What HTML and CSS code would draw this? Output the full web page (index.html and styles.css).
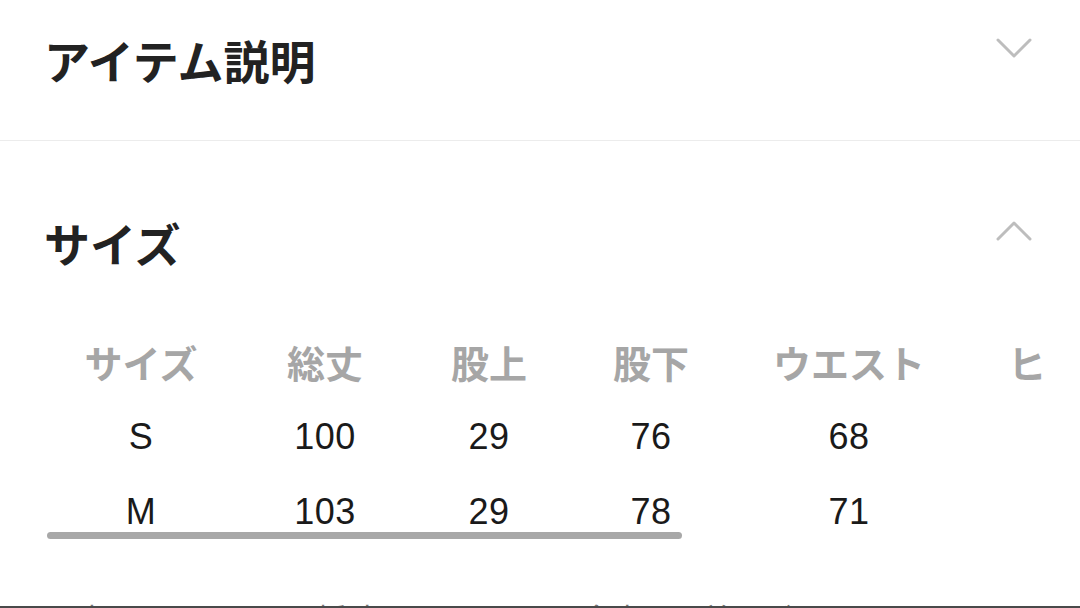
FILE: index.html
```html
<!DOCTYPE html>
<html lang="ja">
<head>
<meta charset="utf-8">
<link rel="stylesheet" href="styles.css">
</head>
<body>
<div class="page">
  <section class="acc acc-first">
    <div class="acc-head">
      <h2 class="acc-title">アイテム説明</h2>
      <svg class="chev" width="38" height="22" viewBox="0 0 38 22"><polyline points="3,3 19,19 35,3" fill="none" stroke="#bdbdbd" stroke-width="3" stroke-linecap="round" stroke-linejoin="round"/></svg>
    </div>
  </section>
  <section class="acc acc-second">
    <div class="acc-head">
      <h2 class="acc-title">サイズ</h2>
      <svg class="chev" width="38" height="22" viewBox="0 0 38 22"><polyline points="3,19 19,3 35,19" fill="none" stroke="#bdbdbd" stroke-width="3" stroke-linecap="round" stroke-linejoin="round"/></svg>
    </div>
    <div class="table-wrap">
      <table class="size-table">
        <colgroup>
          <col class="c1"><col class="c2"><col class="c3"><col class="c4"><col class="c5"><col class="c6">
        </colgroup>
        <thead>
          <tr><th>サイズ</th><th>総丈</th><th>股上</th><th>股下</th><th>ウエスト</th><th>ヒップ</th></tr>
        </thead>
        <tbody>
          <tr><td>S</td><td>100</td><td>29</td><td>76</td><td>68</td><td></td></tr>
          <tr><td>M</td><td>103</td><td>29</td><td>78</td><td>71</td><td></td></tr>
        </tbody>
      </table>
      <div class="scroll-thumb"></div>
    </div>
    <p class="note">※商品は平置きにて採寸しております。多少の誤差はご了承ください。</p>
  </section>
</div>
<div class="bottom-edge"></div>
</body>
</html>
```

FILE: styles.css
```css
html, body {
  margin: 0;
  padding: 0;
  background: #ffffff;
}
body {
  width: 1080px;
  height: 608px;
  overflow: hidden;
  font-family: "Liberation Sans", "Noto Sans CJK JP", sans-serif;
  color: #1e1e1e;
}
.page {
  width: 1080px;
}
.acc-first {
  padding: 29px 0 51px;
  border-bottom: 1px solid #ececec;
}
.acc-second {
  padding: 71px 0 0;
}
.acc-head {
  height: 60px;
  display: flex;
  align-items: center;
  justify-content: space-between;
  padding: 0 47px 0 44px;
}
.acc-title {
  margin: 0;
  font-family: "Noto Sans CJK JP", sans-serif;
  font-weight: 700;
  font-size: 46px;
  line-height: 60px;
  color: #222222;
}
.chev {
  margin-bottom: 22px;
}
.table-wrap {
  position: relative;
  margin: 52px 0 0 47px;
  width: 999px;
  overflow: hidden;
}
.size-table {
  border-collapse: collapse;
  table-layout: fixed;
  width: 1124px;
  white-space: nowrap;
}
.c1 { width: 188px; }
.c2 { width: 180px; }
.c3 { width: 148px; }
.c4 { width: 176px; }
.c5 { width: 220px; }
.c6 { width: 212px; }
.size-table th,
.size-table td {
  padding: 0;
  height: 75px;
  text-align: center;
}
.size-table th {
  font-family: "Noto Sans CJK JP", sans-serif;
  font-weight: 700;
  font-size: 38px;
  color: #a6a6a6;
}
.size-table td {
  font-family: "Liberation Sans", "Noto Sans CJK JP", sans-serif;
  font-size: 36px;
  letter-spacing: 0.5px;
  color: #1a1a1a;
}
.scroll-thumb {
  position: absolute;
  left: 0;
  bottom: 10px;
  width: 635px;
  height: 7px;
  border-radius: 4px;
  background: #a8a8a8;
}
.note {
  margin: 46px 0 0 47px;
  font-family: "Noto Sans CJK JP", sans-serif;
  font-size: 30px;
  color: #777777;
  white-space: nowrap;
}
.bottom-edge {
  position: fixed;
  left: 0;
  bottom: 0;
  width: 1080px;
  height: 2px;
  background: #4a4a4a;
}
```
